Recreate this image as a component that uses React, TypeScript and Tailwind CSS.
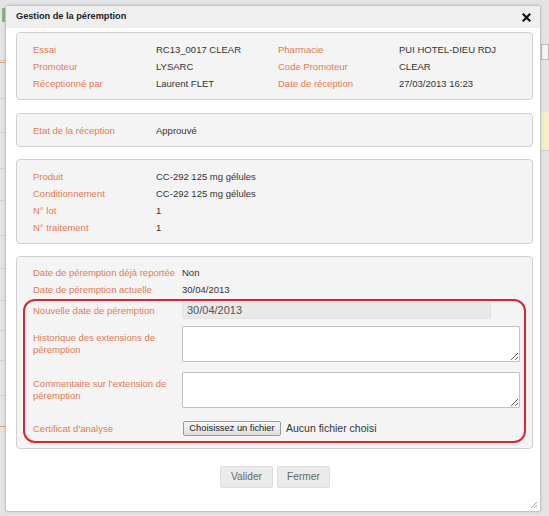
import React from "react";

const font = { fontFamily: '"Liberation Sans", Arial, sans-serif' };

function Row({ label, value, valueW = "w-[122px]" }: { label: string; value: string; valueW?: string }) {
  return (
    <>
      <div className="w-[123px] text-[#e37a52]">{label}</div>
      <div className={`${valueW} text-[#333]`}>{value}</div>
    </>
  );
}

function Panel({ children, className = "" }: { children: React.ReactNode; className?: string }) {
  return (
    <div className={`bg-[#f4f4f4] border border-[#d0d0d0] rounded-[4px] ${className}`}>{children}</div>
  );
}

function Line({ label, value }: { label: string; value: string }) {
  return (
    <div className="flex h-[17px] items-center">
      <div className="w-[123px] text-[#e37a52]">{label}</div>
      <div className="text-[#333]">{value}</div>
    </div>
  );
}

export default function App() {
  return (
    <div
      className="relative w-[549px] h-[516px] bg-[#e4e4e4] overflow-hidden text-[9.5px] leading-none"
      style={font}
    >
      {/* background page fragments */}
      <div className="absolute left-0 top-0 w-[5px] h-full flex flex-col">
        <div className="h-[8px]" />
        <div className="h-[14px] w-[3px] ml-[2px] bg-[#8fb08a]" />
        {[60, 98, 132, 168, 200, 235, 268, 300, 330, 360, 395].map((y) => (
          <div key={y} className="absolute left-0 w-[5px] h-px bg-[#cfcfcf]" style={{ top: y }} />
        ))}
        <div className="absolute left-0 top-[62px] w-[5px] h-px bg-[#e0a070]" />
        <div className="absolute left-0 top-[426px] w-[5px] h-px bg-[#e0a070]" />
      </div>
      <div className="absolute left-[541px] top-[44px] w-[8px] h-[16px] border border-[#bbb] bg-[#f4f4f4]" />
      <div className="absolute left-[541px] top-[112px] w-[8px] h-[38px] bg-[#f3efc8]" />
      <div className="absolute left-[541px] top-[150px] w-[8px] h-px bg-[#cfcfcf]" />

      {/* dialog window */}
      <div className="absolute left-[5px] top-[5px] w-[536px] h-[507px] bg-white border border-[#c4c4c4] rounded-[3px] shadow-[0_0_3px_rgba(0,0,0,0.15)] flex flex-col">
        <div className="h-[22px] bg-[#efefef] flex items-center justify-between pl-[10px] pr-[9px] rounded-t-[3px]">
          <span className="font-bold text-[9.2px] text-[#222]">Gestion de la péremption</span>
          <svg width="9" height="9" viewBox="0 0 9 9">
            <path d="M1.5 1.5 L7.5 7.5 M7.5 1.5 L1.5 7.5" stroke="#111" strokeWidth="2.2" strokeLinecap="square" />
          </svg>
        </div>

        <div className="flex flex-col pl-[10px] pr-[7px] pt-[4px]">
          <Panel className="pt-[8px] pb-[7px] pl-[16px]">
            <div className="flex flex-col">
              {[
                ["Essai", "RC13_0017 CLEAR", "Pharmacie", "PUI HOTEL-DIEU RDJ"],
                ["Promoteur", "LYSARC", "Code Promoteur", "CLEAR"],
                ["Réceptionné par", "Laurent FLET", "Date de réception", "27/03/2013 16:23"],
              ].map(([a, b, c, d]) => (
                <div key={a} className="flex h-[17px] items-center">
                  <Row label={a} value={b} />
                  <div className="w-[121px] text-[#e37a52]">{c}</div>
                  <div className="text-[#333]">{d}</div>
                </div>
              ))}
            </div>
          </Panel>

          <Panel className="mt-[13px] pt-[8px] pb-[7px] pl-[16px]">
            <Line label="Etat de la réception" value="Approuvé" />
          </Panel>

          <Panel className="mt-[12px] pt-[8px] pb-[7px] pl-[16px]">
            <Line label="Produit" value="CC-292 125 mg gélules" />
            <Line label="Conditionnement" value="CC-292 125 mg gélules" />
            <Line label="N° lot" value="1" />
            <Line label="N° traitement" value="1" />
          </Panel>

          <Panel className="mt-[12px] pt-[7px] pb-[5px] px-[6px]">
            <div className="pl-[10px]">
              <div className="flex h-[17px] items-center">
                <div className="w-[149px] text-[#e37a52]">Date de péremption déjà reportée</div>
                <div className="text-[#333]">Non</div>
              </div>
              <div className="flex h-[17px] items-center">
                <div className="w-[149px] text-[#e37a52]">Date de péremption actuelle</div>
                <div className="text-[#333]">30/04/2013</div>
              </div>
            </div>
            <div className="mt-[1px] border-2 border-[#dc2430] rounded-[12px] pl-[8px] pr-[4px] pt-[1px] pb-[5px]">
              <div className="flex h-[17px] items-center">
                <div className="w-[149px] text-[#e37a52]">Nouvelle date de péremption</div>
                <div className="w-[309px] h-[17px] bg-[#e9e9e9] border border-[#e2e2e2] rounded-[2px] flex items-center pl-[4px] text-[11px] text-[#555]">
                  30/04/2013
                </div>
              </div>
              <div className="flex h-[36px] items-center mt-[7px]">
                <div className="w-[149px] pr-[10px] text-[#e37a52] leading-[12px]">
                  Historique des extensions de péremption
                </div>
                <textarea className="w-[339px] h-[36px] bg-white border border-[#c2c2c2] rounded-[1px] outline-none" />
              </div>
              <div className="flex h-[36px] items-center mt-[10px]">
                <div className="w-[149px] pr-[10px] text-[#e37a52] leading-[12px]">
                  Commentaire sur l'extension de péremption
                </div>
                <textarea className="w-[339px] h-[36px] bg-white border border-[#c2c2c2] rounded-[1px] outline-none" />
              </div>
              <div className="flex h-[15px] items-center mt-[13px]">
                <div className="w-[150px] text-[#e37a52]">Certificat d'analyse</div>
                <div className="h-[15px] w-[98px] border border-[#9a9a9a] rounded-[2px] bg-gradient-to-b from-[#f6f6f6] to-[#dedede] flex items-center justify-center text-[9.3px] text-[#222]">
                  Choisissez un fichier
                </div>
                <div className="ml-[5px] text-[10.5px] text-[#333]">Aucun fichier choisi</div>
              </div>
            </div>
          </Panel>

          <div className="mt-[17px] flex justify-center gap-[4px] pl-[1px]">
            <div className="w-[53px] h-[22px] bg-[#ebebeb] border border-[#dedede] rounded-[2px] flex items-center justify-center text-[10.2px] text-[#666]">
              Valider
            </div>
            <div className="w-[53px] h-[22px] bg-[#ebebeb] border border-[#dedede] rounded-[2px] flex items-center justify-center text-[10.2px] text-[#666]">
              Fermer
            </div>
          </div>
        </div>

        <svg className="absolute right-[2px] bottom-[2px]" width="9" height="9" viewBox="0 0 9 9">
          <path d="M8 2 L2 8 M8 5 L5 8 M8 7.5 L7.5 8" stroke="#999" strokeWidth="0.9" />
        </svg>
      </div>
    </div>
  );
}
